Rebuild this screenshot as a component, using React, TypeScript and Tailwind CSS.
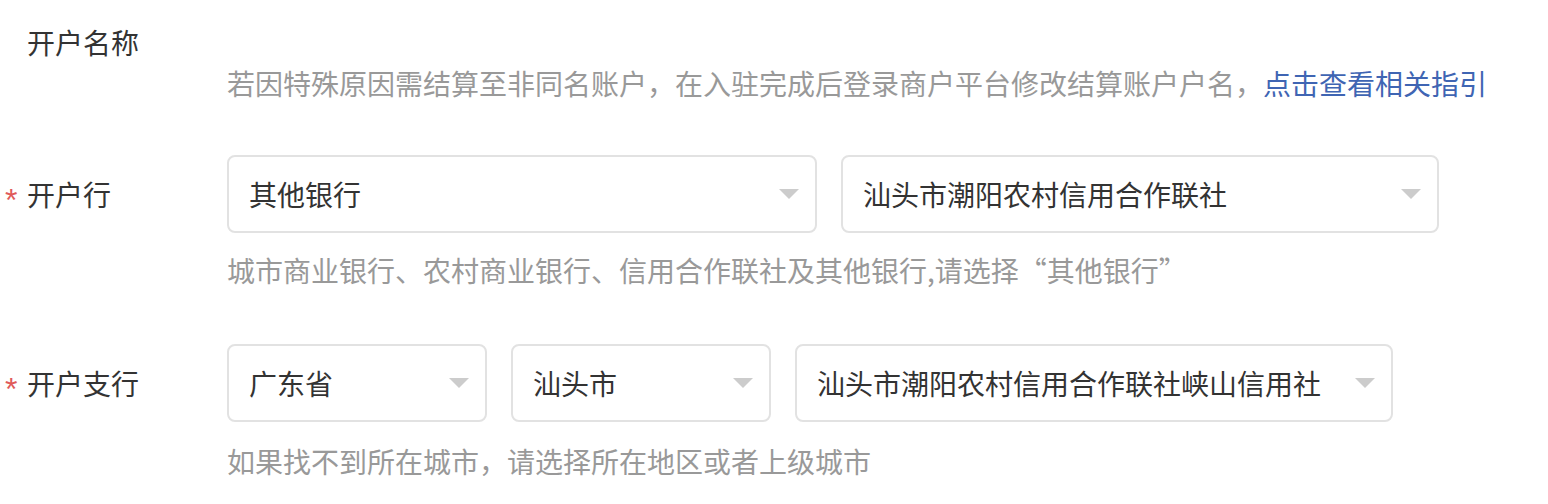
import React from "react";

const font = { fontFamily: '"Noto Sans CJK SC", "Noto Sans", sans-serif' };

function Arrow() {
  return (
    <svg width="20" height="10" viewBox="0 0 20 10" className="shrink-0">
      <polygon points="0,0 20,0 10,10" fill="#cccccc" />
    </svg>
  );
}

function Select({ value, w }: { value: string; w: string }) {
  return (
    <div
      className={`${w} h-[78px] border-2 border-[#e2e2e2] rounded-[8px] bg-white flex items-center justify-between pl-[20px] pr-[16px]`}
    >
      <span className="text-[28px] text-[#333333] whitespace-nowrap">{value}</span>
      <Arrow />
    </div>
  );
}

function Label({ text, required }: { text: string; required?: boolean }) {
  return (
    <div className="w-[227px] shrink-0 flex items-center">
      <span className="w-[27px] pl-[5px] h-[40px] flex items-center">
        {required ? (
          <span className="text-[32px] text-[#e05a5a] leading-none font-['Liberation_Sans'] translate-y-[6px]">
            *
          </span>
        ) : null}
      </span>
      <span className="text-[28px] text-[#333333]">{text}</span>
    </div>
  );
}

export default function App() {
  return (
    <div className="w-[1548px] h-[504px] bg-white pt-[22px]" style={font}>
      <div className="flex h-[40px] items-center">
        <Label text="开户名称" />
      </div>
      <div className="pl-[227px] mt-[1px] leading-[40px] text-[28px] text-[#999999] whitespace-nowrap">
        若因特殊原因需结算至非同名账户，在入驻完成后登录商户平台修改结算账户户名，
        <span className="text-[#3f65b3]">点击查看相关指引</span>
      </div>

      <div className="flex items-center mt-[52px]">
        <Label text="开户行" required />
        <div className="flex gap-[24px]">
          <Select value="其他银行" w="w-[590px]" />
          <Select value="汕头市潮阳农村信用合作联社" w="w-[598px]" />
        </div>
      </div>
      <div className="pl-[227px] mt-[17px] leading-[40px] text-[28px] text-[#999999] whitespace-nowrap">
        城市商业银行、农村商业银行、信用合作联社及其他银行,请选择“其他银行”
      </div>

      <div className="flex items-center mt-[54px]">
        <Label text="开户支行" required />
        <div className="flex gap-[24px]">
          <Select value="广东省" w="w-[260px]" />
          <Select value="汕头市" w="w-[260px]" />
          <Select value="汕头市潮阳农村信用合作联社峡山信用社" w="w-[598px]" />
        </div>
      </div>
      <div className="pl-[227px] mt-[19px] leading-[40px] text-[28px] text-[#999999] whitespace-nowrap">
        如果找不到所在城市，请选择所在地区或者上级城市
      </div>
    </div>
  );
}
